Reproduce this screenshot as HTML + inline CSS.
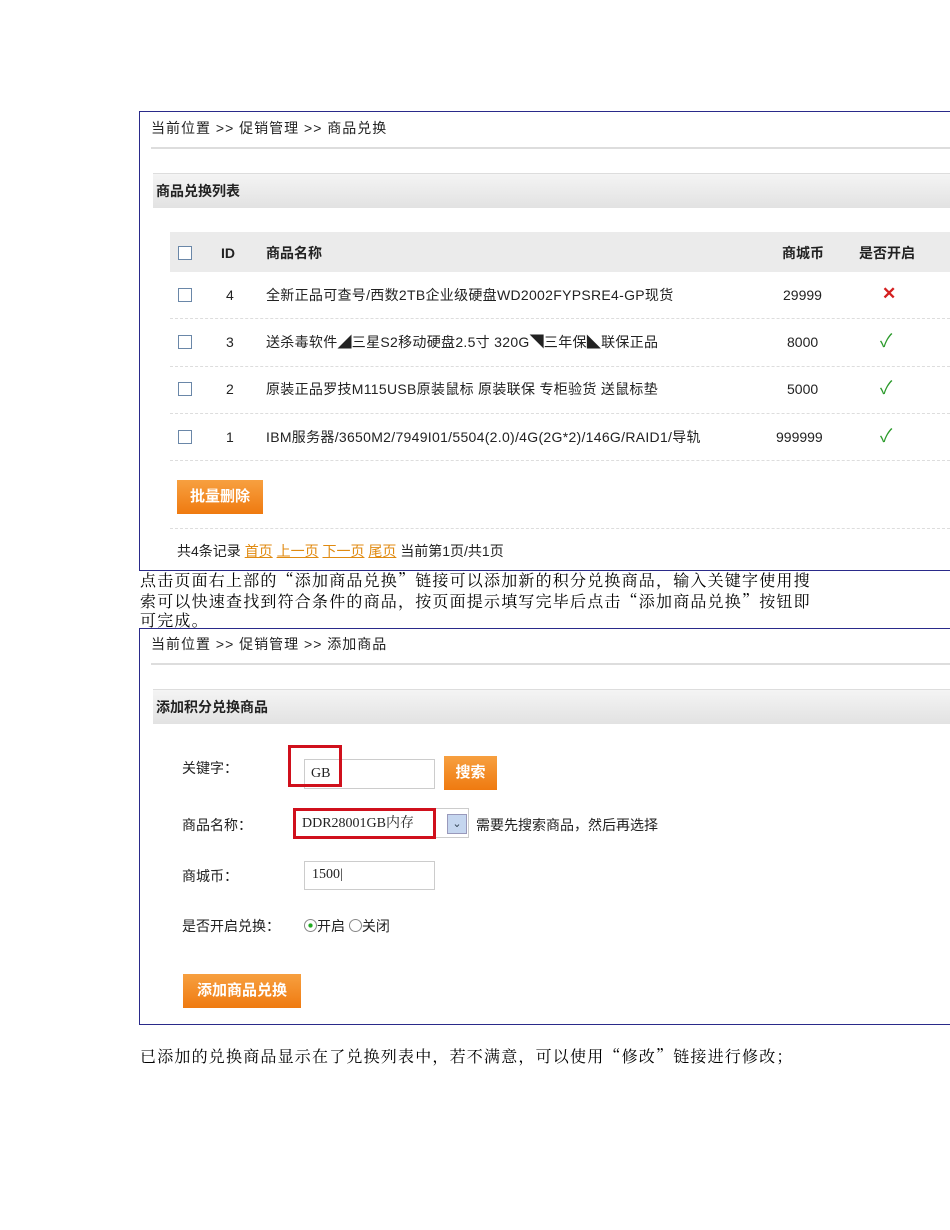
<!DOCTYPE html>
<html><head><meta charset="utf-8"><style>
body{margin:0;width:950px;height:1230px;background:#fff;position:relative;overflow:hidden;font-family:"Liberation Sans","Noto Sans CJK SC",sans-serif;font-size:14px;color:#222}
.a{position:absolute;white-space:nowrap;line-height:16px}
.box{position:absolute;border:1px solid #2a2a8a;border-right:none;background:#fff}
.hl{position:absolute;height:2px;background:#ddd}
.hd{position:absolute;height:34px;background:linear-gradient(#f4f4f4,#e2e2e2);border-top:1px solid #ddd}
.dash{position:absolute;left:170px;right:0;border-top:1px dashed #ddd}
.cb{position:absolute;width:12px;height:12px;border:1px solid #6a87a8;background:#fff}
.btn{position:absolute;background:linear-gradient(#f7a040,#ef7a10);color:#fff;font-weight:bold;font-size:15px;text-align:center}
.inp{position:absolute;border:1px solid #ccc;background:#fff}
.red{position:absolute;border:3px solid #d0101c}
.p{position:absolute;left:140px;font-family:"Noto Serif CJK SC",serif;font-size:16px;letter-spacing:1.2px;line-height:20px;color:#000;white-space:nowrap}
.bc{letter-spacing:1px}
</style></head><body>
<div class="box" style="left:139px;top:111px;width:811px;height:458px"></div>
<div class="a bc" style="left:151px;top:120px">当前位置 &gt;&gt; 促销管理 &gt;&gt; 商品兑换</div>
<div class="hl" style="left:151px;right:0;top:147px"></div>
<div class="hd" style="left:153px;right:0;top:173px"></div>
<div class="a" style="left:156px;top:183px;font-weight:bold">商品兑换列表</div>
<div class="a" style="left:170px;right:0;top:232px;height:40px;background:#ebebeb"></div>
<div class="cb" style="left:178px;top:246px"></div>
<div class="a" style="left:221px;top:245px;font-weight:bold">ID</div>
<div class="a" style="left:266px;top:245px;font-weight:bold">商品名称</div>
<div class="a" style="left:782px;top:245px;font-weight:bold">商城币</div>
<div class="a" style="left:859px;top:245px;font-weight:bold">是否开启</div>

<div class="cb" style="left:178px;top:288px"></div><div class="a" style="left:226px;top:287px">4</div><div class="a" style="left:266px;top:287px;letter-spacing:0.3px">全新正品可查号/西数2TB企业级硬盘WD2002FYPSRE4-GP现货</div><div class="a" style="left:783px;top:287px">29999</div><div class="a" style="left:882px;top:286px;color:#d42020;font-size:17px;font-weight:bold">✕</div>
<div class="dash" style="top:318px"></div>
<div class="cb" style="left:178px;top:335px"></div><div class="a" style="left:226px;top:334px">3</div><div class="a" style="left:266px;top:334px;letter-spacing:0.3px">送杀毒软件◢三星S2移动硬盘2.5寸 320G◥三年保◣联保正品</div><div class="a" style="left:787px;top:334px">8000</div><div class="a" style="left:880px;top:333px;color:#2a9a2a;font-size:18px">✓</div>
<div class="dash" style="top:366px"></div>
<div class="cb" style="left:178px;top:382px"></div><div class="a" style="left:226px;top:381px">2</div><div class="a" style="left:266px;top:381px;letter-spacing:0.3px">原装正品罗技M115USB原装鼠标 原装联保 专柜验货 送鼠标垫</div><div class="a" style="left:787px;top:381px">5000</div><div class="a" style="left:880px;top:380px;color:#2a9a2a;font-size:18px">✓</div>
<div class="dash" style="top:413px"></div>
<div class="cb" style="left:178px;top:430px"></div><div class="a" style="left:226px;top:429px">1</div><div class="a" style="left:266px;top:429px;letter-spacing:0.3px">IBM服务器/3650M2/7949I01/5504(2.0)/4G(2G*2)/146G/RAID1/导轨</div><div class="a" style="left:776px;top:429px">999999</div><div class="a" style="left:880px;top:428px;color:#2a9a2a;font-size:18px">✓</div>
<div class="dash" style="top:460px"></div>
<div class="btn" style="left:177px;top:480px;width:86px;height:34px;line-height:34px">批量删除</div>
<div class="dash" style="top:528px"></div>
<div class="a" style="left:177px;top:543px">共4条记录 <u style="color:#e08a10">首页</u> <u style="color:#e08a10">上一页</u> <u style="color:#e08a10">下一页</u> <u style="color:#e08a10">尾页</u> 当前第1页/共1页</div>

<div class="p" style="top:570px">点击页面右上部的“添加商品兑换”链接可以添加新的积分兑换商品，输入关键字使用搜</div>
<div class="p" style="top:591px">索可以快速查找到符合条件的商品，按页面提示填写完毕后点击“添加商品兑换”按钮即</div>
<div class="p" style="top:610px">可完成。</div>

<div class="box" style="left:139px;top:628px;width:811px;height:395px"></div>
<div class="a bc" style="left:151px;top:636px">当前位置 &gt;&gt; 促销管理 &gt;&gt; 添加商品</div>
<div class="hl" style="left:151px;right:0;top:663px"></div>
<div class="hd" style="left:153px;right:0;top:689px"></div>
<div class="a" style="left:156px;top:699px;font-weight:bold">添加积分兑换商品</div>
<div class="a" style="left:182px;top:760px">关键字：</div>
<div class="inp" style="left:304px;top:759px;width:129px;height:28px"></div>
<div class="red" style="left:288px;top:745px;width:48px;height:36px"></div>
<div class="a" style="left:311px;top:766px;font-family:'Liberation Serif',serif">GB</div>
<div class="btn" style="left:444px;top:756px;width:53px;height:34px;line-height:34px">搜索</div>
<div class="a" style="left:182px;top:817px">商品名称：</div>
<div class="inp" style="left:295px;top:808px;width:172px;height:28px"></div>
<div class="a" style="left:447px;top:814px;width:18px;height:18px;background:#c5d6ef;border:1px solid #99b;color:#345;font-size:11px;text-align:center;line-height:18px">⌄</div>
<div class="red" style="left:293px;top:808px;width:137px;height:25px"></div>
<div class="a" style="left:302px;top:816px;font-family:'Liberation Serif','Noto Serif CJK SC',serif">DDR28001GB内存</div>
<div class="a" style="left:476px;top:817px">需要先搜索商品，然后再选择</div>
<div class="a" style="left:182px;top:868px">商城币：</div>
<div class="inp" style="left:304px;top:861px;width:129px;height:27px"></div>
<div class="a" style="left:312px;top:867px;font-family:'Liberation Serif',serif">1500|</div>
<div class="a" style="left:182px;top:918px">是否开启兑换：</div>
<div class="a" style="left:304px;top:918px"><span style="display:inline-block;width:11px;height:11px;border:1px solid #888;border-radius:50%;vertical-align:-1px;background:radial-gradient(#2a2 25%,#fff 30%)"></span>开启 <span style="display:inline-block;width:11px;height:11px;border:1px solid #888;border-radius:50%;vertical-align:-1px"></span>关闭</div>
<div class="btn" style="left:183px;top:974px;width:118px;height:34px;line-height:34px">添加商品兑换</div>

<div class="p" style="top:1046px">已添加的兑换商品显示在了兑换列表中，若不满意，可以使用“修改”链接进行修改；</div>
</body></html>
